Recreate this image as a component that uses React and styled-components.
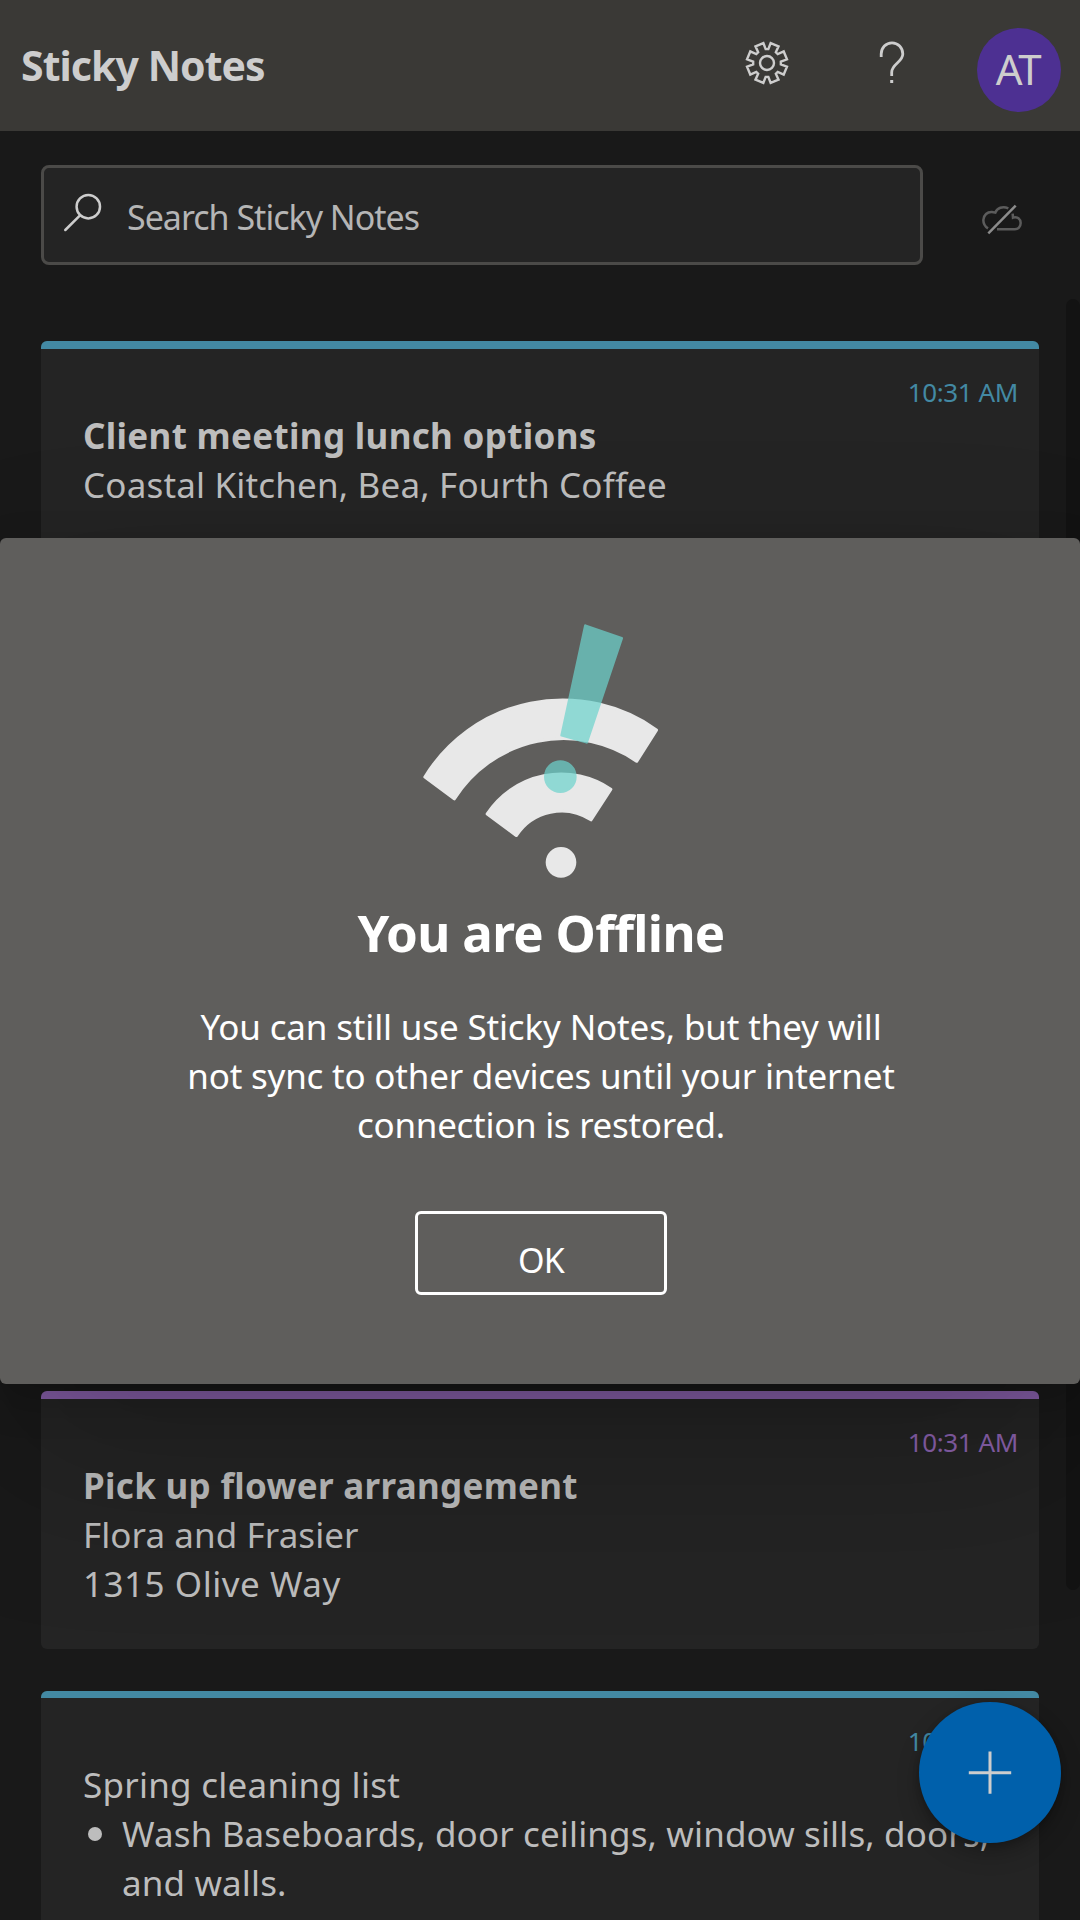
import React from 'react';
import styled, { createGlobalStyle } from 'styled-components';

const GlobalStyle = createGlobalStyle`
  *, *::before, *::after { box-sizing: border-box; }
  body {
    margin: 0;
    background: #191919;
    font-family: "Noto Sans", "Open Sans", sans-serif;
    overflow: hidden;
  }
  h1, h2, h3, p, ul { margin: 0; padding: 0; }
`;

const Screen = styled.div`
  position: relative;
  width: 1080px;
  height: 1920px;
  overflow: hidden;
  background: #191919;
`;

const Header = styled.header`
  display: flex;
  align-items: flex-start;
  height: 131px;
  padding: 28px 19px 0 21px;
  background: #3a3936;
  color: #cdcdcd;
`;

const AppTitle = styled.h1`
  flex: 1;
  margin-top: 9px;
  font-size: 41px;
  line-height: 56px;
  letter-spacing: -0.95px;
`;

const Icon = styled.svg`
  flex: none;
  width: 48px;
  height: 48px;
  fill: none;
  stroke: #cdcdcd;
`;

const HeaderIcon = styled(Icon)`
  margin-top: 11px;
  margin-right: ${(p) => p.$gap}px;
`;

const Avatar = styled.div`
  display: flex;
  justify-content: center;
  width: 84px;
  height: 84px;
  padding-right: 2px;
  border-radius: 50%;
  background: #4d3092;
  font-size: 42px;
  line-height: 82px;
  letter-spacing: -1.5px;
`;

const SearchRow = styled.div`
  display: flex;
  align-items: center;
  gap: 56px;
  padding: 34px 0 0 41px;
`;

const SearchBox = styled.div`
  display: flex;
  align-items: center;
  gap: 19px;
  width: 882px;
  height: 100px;
  padding-left: 16px;
  border: 3px solid #4b4a48;
  border-radius: 8px;
  background: #242424;
`;

const SearchIcon = styled(Icon)`
  margin-bottom: 6px;
`;

const Placeholder = styled.span`
  margin-top: 4px;
  font-size: 34px;
  line-height: 50px;
  letter-spacing: -1px;
  color: #b5b5b5;
`;

const NoteList = styled.main`
  display: flex;
  flex-direction: column;
  gap: 42px;
  width: 1039px;
  margin-top: 76px;
  padding-left: 41px;
`;

const Card = styled.article`
  flex: none;
  height: ${(p) => p.$height}px;
  overflow: hidden;
  border-radius: 6px;
  background: #242424;
`;

const Strip = styled.div`
  height: ${(p) => p.$size}px;
  background: ${(p) => p.$color};
`;

const CardBody = styled.div`
  display: flex;
  flex-direction: column;
  padding: 25px 21px 0 42px;
  color: #bdbdbd;
  white-space: nowrap;
`;

const Time = styled.time`
  align-self: flex-end;
  margin-bottom: 1px;
  font-size: 26px;
  line-height: 36px;
  letter-spacing: -0.4px;
  color: ${(p) => p.$color};
`;

const NoteHeading = styled.h2`
  font-size: 35px;
  line-height: 49px;
  letter-spacing: ${(p) => p.$spacing}px;
`;

const NoteLine = styled.p`
  font-size: 35px;
  line-height: 49px;
  letter-spacing: ${(p) => p.$spacing}px;
`;

const BulletItem = styled.div`
  display: flex;
  gap: 20px;
  padding-left: 5px;
  &::before {
    content: "";
    flex: none;
    width: 14px;
    height: 14px;
    margin-top: 18px;
    border-radius: 50%;
    background: #bdbdbd;
  }
`;

const ScrollThumb = styled.div`
  position: absolute;
  top: 299px;
  right: 0;
  width: 14px;
  height: 1291px;
  border-radius: 7px;
  background: #131313;
`;

const AddButton = styled.button`
  position: absolute;
  top: 1702px;
  left: 919px;
  display: grid;
  place-items: center;
  width: 142px;
  height: 141px;
  padding: 0;
  border: 0;
  border-radius: 50%;
  background: #0060ab;
  box-shadow: 0 10px 22px rgba(0, 0, 0, 0.25), 0 2px 6px rgba(0, 0, 0, 0.2);
`;

const Dialog = styled.section`
  position: absolute;
  top: 538px;
  left: 0;
  display: flex;
  flex-direction: column;
  align-items: center;
  width: 1080px;
  height: 846px;
  padding-top: 62px;
  border-radius: 6px;
  background: #5f5e5c;
  box-shadow: 0 77px 173px rgba(0, 0, 0, 0.22), 0 14px 43px rgba(0, 0, 0, 0.18);
  color: #fff;
`;

const Illustration = styled.svg`
  flex: none;
  width: 280px;
  height: 290px;
`;

const DialogTitle = styled.h2`
  margin-top: 7px;
  padding-left: 2px;
  font-size: 51px;
  line-height: 70px;
  letter-spacing: -0.69px;
`;

const Message = styled.div`
  margin-top: 35px;
  padding-left: 2px;
  text-align: center;
`;

const MessageLine = styled.p`
  font-size: 35px;
  line-height: 49px;
  letter-spacing: ${(p) => p.$spacing}px;
  white-space: nowrap;
`;

const OkButton = styled.button`
  width: 252px;
  height: 84px;
  margin: 62px 0 0 2px;
  padding: 13px 0 0;
  border: 3px solid #fff;
  border-radius: 6px;
  background: transparent;
  color: #fff;
  font: 400 34px/50px "Noto Sans", "Open Sans", sans-serif;
  letter-spacing: -0.8px;
`;

const BLUE = '#4389a3';
const PURPLE = '#8b62ae';

// Eight notches cut into a ring: each contributes two rim points and two floor points.
const gearPoints = Array.from({ length: 8 }, (_, i) => i * 45)
  .flatMap((a) => [[a - 10.4, 20.3], [a - 5.5, 13.9], [a + 5.5, 13.9], [a + 10.4, 20.3]])
  .map(([deg, r]) => {
    const t = (deg * Math.PI) / 180;
    return `${(24 + r * Math.sin(t)).toFixed(2)},${(24 - r * Math.cos(t)).toFixed(2)}`;
  })
  .join(' ');

function Gear() {
  return (
    <HeaderIcon $gap={77} viewBox="0 0 48 48" strokeWidth="2.4">
      <polygon points={gearPoints} />
      <circle cx="24" cy="24" r="7" />
    </HeaderIcon>
  );
}

function Help() {
  return (
    <HeaderIcon $gap={61} viewBox="0 0 48 48" strokeWidth="2.8">
      <path d="M13.2 18V15A10.8 11.2 0 0 1 34.8 15C34.8 23 23.7 25 23.7 33.2V37" />
      <rect x="22.2" y="42" width="3" height="3" fill="#cdcdcd" stroke="none" transform="translate(0 -1)" />
    </HeaderIcon>
  );
}

function CloudOff() {
  return (
    <Icon viewBox="837 573 144 144" strokeWidth="7.5">
      <g stroke="#5c5c5c">
        <path d="M864 685C854 679 850 670 850 660C851 645 862 635 876 636L886 638C891 624 908 617 925 625" />
        <path d="M938 641L939 653C952 648 962 658 962 669C962 680 954 688 944 688H891" />
      </g>
      <path d="M865 700L947 617" stroke="#8c8c8c" />
    </Icon>
  );
}

function OfflineArt() {
  return (
    <Illustration viewBox="0 0 840 870">
      <g fill="#e8e8e8" stroke="#e8e8e8" strokeWidth="10" strokeLinejoin="round">
        <path d="M75 531A485 485 0 0 1 769 390L710 483A388 388 0 0 0 163 596Z" />
        <path d="M262 642A265 265 0 0 1 632 568L573 659A162 162 0 0 0 349 706Z" />
        <circle cx="483" cy="787" r="41" />
      </g>
      {/* The mark is drawn as one translucent layer so that overlapping strokes stay even. */}
      <g fill="#6dd3cd" stroke="#6dd3cd" strokeWidth="8" strokeLinejoin="round" opacity="0.71">
        <path d="M556 77L665 115L560 427L485 406Z" />
        <circle cx="481" cy="530" r="45" />
      </g>
    </Illustration>
  );
}

function Note({ height, color, strip = 8, children }) {
  return (
    <Card $height={height}>
      <Strip $size={strip} $color={color} />
      <CardBody>
        <Time $color={color}>10:31 AM</Time>
        {children}
      </CardBody>
    </Card>
  );
}

export default function App() {
  return (
    <Screen>
      <GlobalStyle />
      <Header>
        <AppTitle>Sticky Notes</AppTitle>
        <Gear />
        <Help />
        <Avatar>AT</Avatar>
      </Header>
      <SearchRow>
        <SearchBox>
          <SearchIcon viewBox="0 0 48 48" strokeWidth="2.5" strokeLinecap="round">
            <circle cx="28.3" cy="18.7" r="11.7" />
            <path d="M5.3 42L20 27.3" />
          </SearchIcon>
          <Placeholder>Search Sticky Notes</Placeholder>
        </SearchBox>
        <CloudOff />
      </SearchRow>
      <NoteList>
        <Note height={1008} color={BLUE}>
          <NoteHeading $spacing={0.33}>Client meeting lunch options</NoteHeading>
          <NoteLine $spacing={0.17}>Coastal Kitchen, Bea, Fourth Coffee</NoteLine>
        </Note>
        <Note height={258} color={PURPLE}>
          <NoteHeading $spacing={0.3}>Pick up flower arrangement</NoteHeading>
          <NoteLine $spacing={0.08}>Flora and Frasier</NoteLine>
          <NoteLine $spacing={0.52}>1315 Olive Way</NoteLine>
        </Note>
        <Note height={300} color={BLUE} strip={7}>
          <NoteLine $spacing={0.25}>Spring cleaning list</NoteLine>
          <BulletItem>
            <NoteLine $spacing={0.13}>
              Wash Baseboards, door ceilings, window sills, doors,
              <br />
              and walls.
            </NoteLine>
          </BulletItem>
        </Note>
      </NoteList>
      <ScrollThumb />
      <AddButton aria-label="Add note">
        <Icon viewBox="0 0 48 48" strokeWidth="3">
          <path d="M2.8 23.8H45.2M24 2.5V44.7" />
        </Icon>
      </AddButton>
      <Dialog>
        <OfflineArt />
        <DialogTitle>You are Offline</DialogTitle>
        <Message>
          <MessageLine $spacing={-0.16}>You can still use Sticky Notes, but they will</MessageLine>
          <MessageLine $spacing={-0.21}>not sync to other devices until your internet</MessageLine>
          <MessageLine $spacing={-0.3}>connection is restored.</MessageLine>
        </Message>
        <OkButton>OK</OkButton>
      </Dialog>
    </Screen>
  );
}
